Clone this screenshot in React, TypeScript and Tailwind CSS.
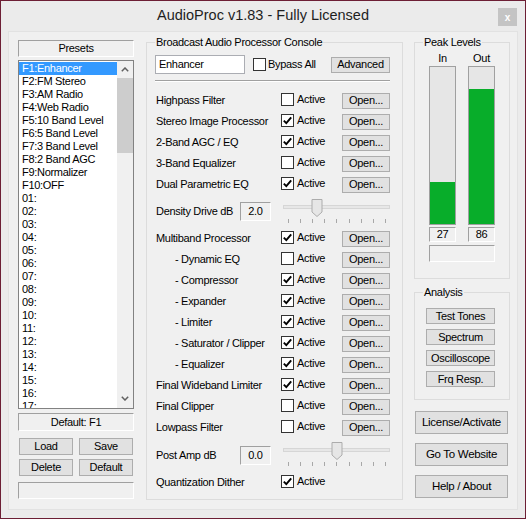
import React from 'react';

type Row = { label: string; sub?: boolean; on: boolean };

const topRows: Row[] = [
  { label: 'Highpass Filter', on: false },
  { label: 'Stereo Image Processor', on: true },
  { label: '2-Band AGC / EQ', on: true },
  { label: '3-Band Equalizer', on: false },
  { label: 'Dual Parametric EQ', on: true },
];

const bandRows: Row[] = [
  { label: 'Multiband Processor', on: true },
  { label: '- Dynamic EQ', sub: true, on: false },
  { label: '- Compressor', sub: true, on: true },
  { label: '- Expander', sub: true, on: true },
  { label: '- Limiter', sub: true, on: true },
  { label: '- Saturator / Clipper', sub: true, on: true },
  { label: '- Equalizer', sub: true, on: true },
  { label: 'Final Wideband Limiter', on: true },
  { label: 'Final Clipper', on: false },
  { label: 'Lowpass Filter', on: false },
];

// only the rows that fit in the list box (17: is half visible)
const presets = [
  'F1:Enhancer',
  'F2:FM Stereo',
  'F3:AM Radio',
  'F4:Web Radio',
  'F5:10 Band Level',
  'F6:5 Band Level',
  'F7:3 Band Level',
  'F8:2 Band AGC',
  'F9:Normalizer',
  'F10:OFF',
  ...Array.from({ length: 17 }, (_, i) => `${String(i + 1).padStart(2, '0')}:`),
];

const meters = [
  { label: 'In', value: 27 },
  { label: 'Out', value: 86 },
];

const sunken = 'border border-t-[#a0a0a0] border-l-[#a0a0a0] border-r-white border-b-white';

function Check({ on }: { on: boolean }) {
  return (
    <span className="flex h-[13px] w-[13px] shrink-0 items-center justify-center border border-[#333333] bg-white">
      {on && (
        <svg width="11" height="11" viewBox="0 0 11 11">
          <path d="M1.8 5.6 L4.3 8.2 L9.2 2.4" fill="none" stroke="#000" strokeWidth="1.9" />
        </svg>
      )}
    </span>
  );
}

function Btn({ children, className = '' }: { children?: React.ReactNode; className?: string }) {
  return (
    <button className={`flex shrink-0 items-center justify-center border border-[#adadad] bg-[#e1e1e1] leading-none text-black ${className}`}>
      {children}
    </button>
  );
}

function Chevron({ down }: { down?: boolean }) {
  return (
    <svg width="8" height="5" viewBox="0 0 8 5">
      <path d={down ? 'M0.8 0.8 L4 4 L7.2 0.8' : 'M0.8 4.2 L4 1 L7.2 4.2'} fill="none" stroke="#606060" strokeWidth="1.5" />
    </svg>
  );
}

function Slider({ pos }: { pos: number }) {
  const ticks = Array.from({ length: 9 }, (_, i) => Math.round(5 + i * 12.1) + 0.5);
  return (
    <svg width="107" height="26" viewBox="0 0 107 26" className="ml-[12px] shrink-0">
      <rect x="0.5" y="6.5" width="106" height="3" fill="#e7e7e7" stroke="#d6d6d6" />
      {ticks.map((x) => (
        <line key={x} x1={x} x2={x} y1="20" y2="24" stroke="#a8a8a8" />
      ))}
      <path
        d={`M${pos - 5} 0.5 H${pos + 5} V13 L${pos} 17.5 L${pos - 5} 13 Z`}
        fill="#e6e6e6"
        stroke="#acacac"
      />
    </svg>
  );
}

function ModRow({ label, sub, on }: Row) {
  return (
    <div className="flex h-[21px] items-center">
      <span className={`w-[126px] whitespace-nowrap ${sub ? 'pl-[20px]' : 'pl-[1px]'}`}>{label}</span>
      <div className="mb-[2px] flex w-[61px] items-center gap-[3px]">
        <Check on={on} />
        <span>Active</span>
      </div>
      <Btn className="h-[16px] w-[48px]">Open...</Btn>
    </div>
  );
}

export default function App() {
  return (
    <div className="flex h-[519px] w-[526px] flex-col border border-[#6d1f35] bg-[#ebebeb] font-['Liberation_Sans',Arial,sans-serif] text-[11px] tracking-[-0.3px] text-black">
      {/* title bar */}
      <div className="relative flex h-[30px] shrink-0 items-center justify-center">
        <span className="text-[14.5px] tracking-normal text-[#1e1e1e]">AudioProc v1.83 - Fully Licensed</span>
        <div className="absolute right-[8px] top-[7px] flex h-[18px] w-[19px] items-center justify-center bg-[#c4c4c4] text-[10px] font-bold text-white">
          x
        </div>
      </div>

      <div className="mx-[7px] mb-[8px] flex flex-1 items-start border border-[#e2e2e2] bg-[#f0f0f0] pl-[9px]">
        {/* presets column */}
        <div className="mt-[8px] flex w-[116px] shrink-0 flex-col">
          <div className={`${sunken} flex h-[17px] items-center justify-center`}>Presets</div>
          <div className="mt-[3px] flex h-[349px] border border-[#828282] bg-white">
            <div className="flex-1 overflow-hidden pt-[1px]">
              {presets.map((p, i) => (
                <div
                  key={p}
                  className={`h-[13px] whitespace-nowrap pl-[3px] leading-[13px] ${i === 0 ? 'bg-[#3399ff] text-white' : ''}`}
                >
                  {p}
                </div>
              ))}
            </div>
            <div className="flex w-[16px] flex-col bg-[#f0f0f0]">
              <div className="flex h-[17px] items-center justify-center">
                <Chevron />
              </div>
              <div className="h-[75px] bg-[#cdcdcd]" />
              <div className="flex-1" />
              <div className="flex h-[17px] items-center justify-center pb-[3px]">
                <Chevron down />
              </div>
            </div>
          </div>
          <div className={`${sunken} mt-[4px] flex h-[18px] items-center justify-center`}>Default: F1</div>
          <div className="mt-[7px] grid grid-cols-2 gap-x-[6px] gap-y-[4px] px-[1px]">
            <Btn className="h-[17px]">Load</Btn>
            <Btn className="h-[17px]">Save</Btn>
            <Btn className="h-[17px]">Delete</Btn>
            <Btn className="h-[17px]">Default</Btn>
          </div>
          <div className={`${sunken} mt-[6px] h-[17px]`} />
        </div>

        {/* console */}
        <fieldset className="ml-[12px] mt-[3px] w-[257px] shrink-0 border border-[#dcdcdc] pb-[6px] pl-[8px]">
          <legend className="px-[1px] leading-[14px]">Broadcast Audio Processor Console</legend>
          <div className="mt-[6px] flex w-[235px] items-center">
            <div className="flex h-[19px] w-[90px] items-center border border-[#abadb3] bg-white pl-[3px]">Enhancer</div>
            <div className="ml-[8px]">
              <Check on={false} />
            </div>
            <span className="ml-[2px]">Bypass All</span>
            <Btn className="ml-auto h-[16px] w-[59px]">Advanced</Btn>
          </div>
          <div className="mt-[6px] h-[2px] w-[235px] border-t border-b border-t-[#a0a0a0] border-b-white" />
          <div className="mt-[8px] flex w-[235px] flex-col">
            {topRows.map((r) => (
              <ModRow key={r.label} {...r} />
            ))}
            <div className="flex h-[33px] items-center">
              <span className="w-[85px] whitespace-nowrap pl-[1px]">Density Drive dB</span>
              <div className={`${sunken} flex h-[19px] w-[31px] items-center justify-center`}>2.0</div>
              <Slider pos={34} />
            </div>
            {bandRows.map((r) => (
              <ModRow key={r.label} {...r} />
            ))}
            <div className="flex h-[34px] items-center">
              <span className="w-[85px] whitespace-nowrap pl-[1px]">Post Amp dB</span>
              <div className={`${sunken} flex h-[19px] w-[31px] items-center justify-center`}>0.0</div>
              <Slider pos={54} />
            </div>
            <div className="flex h-[21px] items-center">
              <span className="w-[126px] whitespace-nowrap pl-[1px]">Quantization Dither</span>
              <div className="mb-[2px] flex items-center gap-[3px]">
                <Check on />
                <span>Active</span>
              </div>
            </div>
          </div>
        </fieldset>

        {/* right column */}
        <div className="ml-[11px] mt-[3px] flex w-[96px] shrink-0 flex-col">
          <fieldset className="border border-[#dcdcdc] pb-[16px] pl-[8px]">
            <legend className="px-[1px] leading-[14px]">Peak Levels</legend>
            <div className="ml-[6px] mt-[2px] flex flex-col">
              <div className="flex gap-[12px]">
                {meters.map((m) => (
                  <div key={m.label} className="flex w-[27px] flex-col items-center">
                    <span className="h-[14px] leading-[14px]">{m.label}</span>
                    <div className="mt-[1px] flex h-[159px] w-full flex-col justify-end border border-[#a0a0a0] bg-[#e6e6e6]">
                      <div className="bg-[#08ad2a]" style={{ height: `${m.value}%` }} />
                    </div>
                    <div className={`${sunken} mt-[2px] flex h-[15px] w-full items-center justify-center`}>{m.value}</div>
                  </div>
                ))}
              </div>
              <div className={`${sunken} mt-[3px] h-[17px] w-[66px]`} />
            </div>
          </fieldset>

          <fieldset className="mt-[6px] border border-[#dcdcdc] pb-[12px] pl-[8px]">
            <legend className="px-[1px] leading-[14px]">Analysis</legend>
            <div className="ml-[3px] mt-[9px] flex flex-col gap-[5px]">
              {['Test Tones', 'Spectrum', 'Oscilloscope', 'Frq Resp.'].map((b) => (
                <Btn key={b} className="h-[16px] w-[69px]">
                  {b}
                </Btn>
              ))}
            </div>
          </fieldset>

          <div className="ml-[1px] mt-[11px] flex flex-col gap-[9px] text-[11.5px]">
            {['License/Activate', 'Go To Website', 'Help / About'].map((b) => (
              <Btn key={b} className="h-[23px] w-[93px]">
                {b}
              </Btn>
            ))}
          </div>
        </div>
      </div>
    </div>
  );
}
